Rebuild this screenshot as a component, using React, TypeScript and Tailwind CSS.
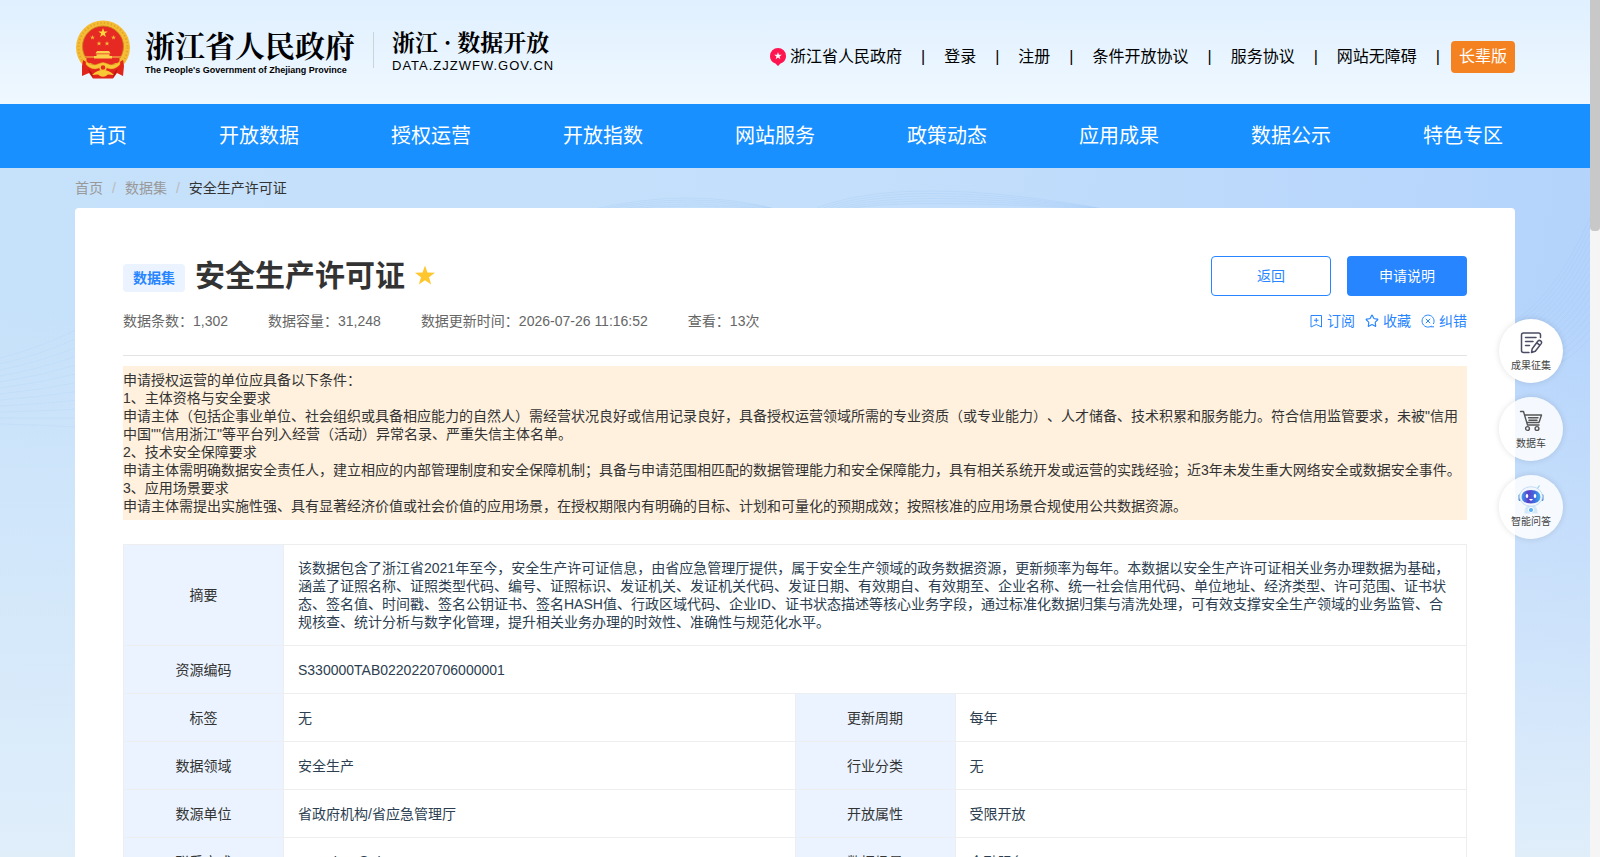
import React from 'react';
import { LuStar } from 'react-icons/lu';

const FONT = "font-['Liberation_Sans','Noto_Sans_CJK_SC',sans-serif]";

const topLinks = ['登录', '注册', '条件开放协议', '服务协议', '网站无障碍'];
const navItems = ['首页', '开放数据', '授权运营', '开放指数', '网站服务', '政策动态', '应用成果', '数据公示', '特色专区'];
const meta = ['数据条数：1,302', '数据容量：31,248', '数据更新时间：2026-07-26 11:16:52', '查看：13次'];
const notice = [
  '申请授权运营的单位应具备以下条件：',
  '1、主体资格与安全要求',
  '申请主体（包括企事业单位、社会组织或具备相应能力的自然人）需经营状况良好或信用记录良好，具备授权运营领域所需的专业资质（或专业能力）、人才储备、技术积累和服务能力。符合信用监管要求，未被"信用中国""信用浙江"等平台列入经营（活动）异常名录、严重失信主体名单。',
  '2、技术安全保障要求',
  '申请主体需明确数据安全责任人，建立相应的内部管理制度和安全保障机制；具备与申请范围相匹配的数据管理能力和安全保障能力，具有相关系统开发或运营的实践经验；近3年未发生重大网络安全或数据安全事件。',
  '3、应用场景要求',
  '申请主体需提出实施性强、具有显著经济价值或社会价值的应用场景，在授权期限内有明确的目标、计划和可量化的预期成效；按照核准的应用场景合规使用公共数据资源。',
];
const summary =
  '该数据包含了浙江省2021年至今，安全生产许可证信息，由省应急管理厅提供，属于安全生产领域的政务数据资源，更新频率为每年。本数据以安全生产许可证相关业务办理数据为基础，涵盖了证照名称、证照类型代码、编号、证照标识、发证机关、发证机关代码、发证日期、有效期自、有效期至、企业名称、统一社会信用代码、单位地址、经济类型、许可范围、证书状态、签名值、时间戳、签名公钥证书、签名HASH值、行政区域代码、企业ID、证书状态描述等核心业务字段，通过标准化数据归集与清洗处理，可有效支撑安全生产领域的业务监管、合规核查、统计分析与数字化管理，提升相关业务办理的时效性、准确性与规范化水平。';
const pairs = [
  ['标签', '无', '更新周期', '每年'],
  ['数据领域', '安全生产', '行业分类', '无'],
  ['数源单位', '省政府机构/省应急管理厅', '开放属性', '受限开放'],
  ['联系方式', 'zcgzxhsg@zj.gov.cn', '数据场景', '金融服务'],
];

function starPoints(cx: number, cy: number, r: number) {
  return Array.from({ length: 10 }, (_, i) => {
    const a = (Math.PI / 5) * i - Math.PI / 2;
    const q = i % 2 ? r * 0.4 : r;
    return `${cx + q * Math.cos(a)},${cy + q * Math.sin(a)}`;
  }).join(' ');
}

function Emblem() {
  return (
    <svg viewBox="0 0 56 60" className="h-[60px] w-14 shrink-0" aria-hidden="true">
      <circle cx="28" cy="27.5" r="27" fill="#f4bd35" />
      <circle cx="28" cy="27.5" r="24.500" fill="none" stroke="#e6a52a" strokeWidth="2" strokeDasharray="1.500 2" />
      <circle cx="28" cy="26.5" r="20.500" fill="#e62a23" stroke="#c9821c" strokeWidth="0.900" />
      <polygon points={starPoints(28, 13, 5)} fill="#fcd63c" />
      <polygon points={starPoints(17.5, 17.5, 2.6)} fill="#f0b63a" />
      <polygon points={starPoints(38.5, 17.5, 2.6)} fill="#f0b63a" />
      <polygon points={starPoints(24, 23.5, 2.6)} fill="#f0b63a" />
      <polygon points={starPoints(32, 23.5, 2.6)} fill="#f0b63a" />
      <path d="M22 31 H34 L35.500 33.500 H20.500 Z M21.500 34.300 H34.500 V36 H37 V38.500 H19 V36 H21.500 Z M10 36.500 H46 L44.500 37.500 H11.500 Z" fill="#fbd14b" />
      <path d="M11.500 39 H44.500 V43 H11.500 Z" fill="#e62a23" />
      <path d="M8 40 L13 43 Q20 49 28 45 Q36 49 43 43 L48 40 L49 46 L48 56 L42 53 L38 58.500 H18 L14 53 L7 56 L7 46 Z" fill="#e1251b" />
      <path d="M11 41 Q17 47 23 44 Q28 41 33 44 Q39 47 45 41 L45 44.500 Q39 51 32 48 Q28 46 24 48 Q17 51 11 44.500 Z" fill="#f8c838" stroke="#e0941a" strokeWidth="0.500" />
      <path d="M13 49 Q18 52 18 58 L15 53 Z M43 49 Q38 52 38 58 L41 53 Z" fill="#b81512" />
      <path d="M17 55 Q22 50 28 50 Q34 50 39 55 L33 54.500 Q28 59 23 54.500 Z" fill="#f9c935" />
      <circle cx="28" cy="47.500" r="3" fill="#e62a23" stroke="#f9c935" strokeWidth="1.400" />
    </svg>
  );
}

function Header() {
  return (
    <header className="bg-linear-to-b from-[#e0f0ff] to-[#eff8ff]">
      <div className="mx-auto flex h-[104px] w-[1440px] max-w-full items-center justify-between">
        <a href="#home" className="flex items-center pb-1 text-black">
          <Emblem />
          <span className="ml-3.5 flex flex-col">
            <span className="font-['Noto_Serif_CJK_SC','Noto_Sans_CJK_SC',serif] text-[30px] leading-10 font-bold">浙江省人民政府</span>
            <span className="text-[9px] leading-3 font-bold whitespace-nowrap">The People's Government of Zhejiang Province</span>
          </span>
          <span className="mx-[18px] h-9 w-px bg-[#ccd3da]" />
          <span className="flex flex-col">
            <span className="font-['Noto_Serif_CJK_SC','Noto_Sans_CJK_SC',serif] text-[23px] leading-8 font-bold">浙江 · 数据开放</span>
            <span className="text-[13px] leading-4 tracking-[1px]">DATA.ZJZWFW.GOV.CN</span>
          </span>
        </a>
        <nav className="flex items-center pt-2.5 text-base text-black">
          <a href="#gov" className="flex items-center gap-1">
            <svg viewBox="0 0 16 18" className="h-[18px] w-4" aria-hidden="true">
              <path d="M8 0 A8 8 0 0 1 16 8 C16 12 13.500 14.500 10.500 15.500 L8 18 L5.500 15.500 C2.500 14.500 0 12 0 8 A8 8 0 0 1 8 0 Z" fill="#ff1450" />
              <polygon points={starPoints(8, 8, 4)} fill="#fff" />
            </svg>
            浙江省人民政府
          </a>
          {topLinks.map((t) => (
            <React.Fragment key={t}>
              <span className="mx-[19px]">|</span>
              <a href="#link">{t}</a>
            </React.Fragment>
          ))}
          <span className="mr-[11px] ml-[19px]">|</span>
          <button type="button" className="h-8 rounded bg-[#f58220] px-2 text-white">长辈版</button>
        </nav>
      </div>
    </header>
  );
}

function Backdrop() {
  return (
    <svg className="absolute inset-0 h-full w-full" viewBox="0 0 1590 689" preserveAspectRatio="none" aria-hidden="true">
      <g fill="none" stroke="#8fc0f2" strokeOpacity="0.2">
        {Array.from({ length: 5 }, (_, i) => (
          <path key={i} d={`M${590 + i * 6} 42 Q690 ${18 + i * 4} 780 42`} />
        ))}
        {Array.from({ length: 6 }, (_, i) => (
          <path key={i} d={`M${812 + i * 6} 42 Q900 ${4 + i * 5} 1110 42`} />
        ))}
        {Array.from({ length: 16 }, (_, i) => (
          <path key={i} d={`M1500 ${160 + i * 3} Q1550 ${140 + i * 5} 1590 ${50 + i * 8}`} />
        ))}
        {Array.from({ length: 12 }, (_, i) => (
          <path key={i} strokeOpacity="0.12" d={`M0 ${190 + i * 6} Q40 ${180 + i * 7} 80 ${160 + i * 9}`} />
        ))}
      </g>
    </svg>
  );
}

function LabelCell({ children }: { children: React.ReactNode }) {
  return (
    <th scope="row" className="border border-[#eceef0] bg-[#eaf3ff] px-3.5 text-center font-normal text-[#333]">
      {children}
    </th>
  );
}

function ValueCell({ children, span }: { children: React.ReactNode; span?: number }) {
  return (
    <td colSpan={span} className="border border-[#eceef0] px-3.5 py-3.5 text-[#2c3e50]">
      {children}
    </td>
  );
}

function DataTable() {
  return (
    <table className="mt-6 w-full table-fixed border-collapse text-sm leading-[18px]">
      <colgroup>
        <col className="w-40" />
        <col />
        <col className="w-40" />
        <col />
      </colgroup>
      <tbody>
        <tr className="h-[101px]">
          <LabelCell>摘要</LabelCell>
          <ValueCell span={3}>{summary}</ValueCell>
        </tr>
        <tr className="h-12">
          <LabelCell>资源编码</LabelCell>
          <ValueCell span={3}>S330000TAB0220220706000001</ValueCell>
        </tr>
        {pairs.map(([a, b, c, d]) => (
          <tr key={a} className="h-12">
            <LabelCell>{a}</LabelCell>
            <ValueCell>{b}</ValueCell>
            <LabelCell>{c}</LabelCell>
            <ValueCell>{d}</ValueCell>
          </tr>
        ))}
      </tbody>
    </table>
  );
}

function SubscribeIcon() {
  return (
    <svg viewBox="0 0 14 14" className="h-3.5 w-3.5" fill="none" stroke="currentColor" aria-hidden="true">
      <path d="M2 1.500 H12.500 V13 L7.250 10.500 L2 13 Z M7.250 4 V8.500 M5 6.250 H9.500" />
    </svg>
  );
}

function CorrectIcon() {
  return (
    <svg viewBox="0 0 14 14" className="h-3.5 w-3.5" fill="none" stroke="currentColor" aria-hidden="true">
      <path d="M10.500 12 A6 6 0 1 1 12.300 10 M9.500 12.800 H13 M4.800 4.800 L9.200 9.200 M9.200 4.800 L4.800 9.200" />
    </svg>
  );
}

function NoteIcon() {
  return (
    <svg viewBox="0 0 24 24" className="mb-[3px] h-6 w-6" fill="none" stroke="#4a4d63" strokeWidth="1.500" strokeLinecap="round" strokeLinejoin="round" aria-hidden="true">
      <path d="M10 21.500 H4.500 Q2.500 21.500 2.500 19.500 V4 Q2.500 2 4.500 2 H19.500 Q21.500 2 21.500 4 V6.500 M6.500 6.500 H17 M6.500 10.500 H14 M6.500 14.500 H10.500" />
      <path d="M12.500 21.500 L13.200 17.800 L19 10 Q20.200 8.800 21.700 9.900 Q23.200 11.100 22.200 12.600 L16.300 20.300 Z M17.800 11.800 L20.800 14.200" />
    </svg>
  );
}

function CartIcon() {
  return (
    <svg viewBox="0 0 24 24" className="mb-[3px] h-6 w-6" fill="none" stroke="#555" strokeWidth="1.400" strokeLinecap="round" strokeLinejoin="round" aria-hidden="true">
      <path d="M1.500 2.500 H4.500 L8.500 16 H20 M5.500 6 H22.500 L20 13.500 H8 M9.500 8.800 H19 M10 11.200 H18" />
      <circle cx="8.500" cy="19.500" r="1.900" />
      <circle cx="18" cy="19.500" r="1.900" />
    </svg>
  );
}

function RobotIcon() {
  return (
    <svg viewBox="0 0 26 30" className="h-[30px] w-[26px]" aria-hidden="true">
      <defs>
        <linearGradient id="visor" x1="0" x2="1">
          <stop offset="0" stopColor="#3fa0f0" />
          <stop offset="0.35" stopColor="#5a3fc8" />
          <stop offset="0.700" stopColor="#3f6fe0" />
          <stop offset="1" stopColor="#3ab0ee" />
        </linearGradient>
      </defs>
      <path d="M19 5 L21.500 1.500" stroke="#8fd0f5" strokeWidth="1.200" />
      <path d="M9 22 H17 Q20 25 19.500 29.500 H6.500 Q6 25 9 22 Z" fill="#d3e8fb" />
      <rect x="0.500" y="10" width="3" height="7" rx="1.500" fill="#4f86c8" />
      <rect x="22.500" y="10" width="3" height="7" rx="1.500" fill="#4f86c8" />
      <ellipse cx="13" cy="12.500" rx="11.500" ry="9.800" fill="#f2f7fd" stroke="#b9d4f0" strokeWidth="0.800" />
      <path d="M3.500 13 Q4 6 13 6 Q22 6 22.500 13 Q22 19.500 13 19.500 Q4 19.500 3.500 13 Z" fill="url(#visor)" />
      <ellipse cx="9" cy="12" rx="1.300" ry="2" fill="#fff" />
      <ellipse cx="17" cy="12" rx="1.300" ry="2" fill="#fff" />
      <path d="M11 15 Q13 18.500 15 15 Z" fill="#fff" />
      <circle cx="13" cy="26" r="2.600" fill="#5db4f5" stroke="#fff" />
    </svg>
  );
}

function FloatButton({ icon, label, solid }: { icon: React.ReactNode; label: string; solid?: boolean }) {
  return (
    <button
      type="button"
      className={`flex h-16 w-16 flex-col items-center justify-end rounded-full pb-[9px] text-[10px] leading-4 text-[#444] shadow-[0_0_6px_rgba(0,0,0,0.12)] ${solid ? 'bg-white' : 'bg-white/85'}`}
    >
      {icon}
      {label}
    </button>
  );
}

export default function App() {
  return (
    <div lang="zh-CN" className={`flex h-screen overflow-hidden [text-spacing-trim:space-all] ${FONT}`}>
      <div className="relative flex min-w-0 flex-1 flex-col overflow-hidden">
        <Header />
        <nav className="bg-[#1890ff]">
          <div className="mx-auto flex h-16 w-[1440px] max-w-full items-center justify-between text-xl text-white">
            {navItems.map((t) => (
              <a key={t} href="#nav" className="px-3">{t}</a>
            ))}
          </div>
        </nav>
        <main className="relative min-h-0 flex-1 bg-[linear-gradient(180deg,rgba(224,240,250,0)_20%,#e0eefa_100%),linear-gradient(100deg,#c6e1fa_0%,#c4dffb_50%,#b2d2fc_100%)]">
          <Backdrop />
          <div className="relative mx-auto w-[1440px] max-w-full">
            <nav className="flex h-10 items-center text-sm text-[#999]">
              <a href="#home">首页</a>
              <span className="mx-[9px] text-[#bbb]">/</span>
              <a href="#sets">数据集</a>
              <span className="mx-[9px] text-[#bbb]">/</span>
              <span className="text-[#333]">安全生产许可证</span>
            </nav>
            <section className="rounded bg-white p-12">
              <div className="flex items-center justify-between">
                <div className="flex items-center">
                  <span className="mt-1 rounded bg-[#eaf3ff] px-2.5 text-sm leading-7 font-bold text-[#2785ff]">数据集</span>
                  <h1 className="ml-2.5 text-[30px] leading-10 font-bold text-[#333]">安全生产许可证</h1>
                  <svg viewBox="0 0 20 20" className="ml-2.5 h-5 w-5" aria-hidden="true">
                    <polygon points={starPoints(10, 10, 10.5)} fill="#ffc62e" />
                  </svg>
                </div>
                <div className="flex gap-4 text-sm">
                  <button type="button" className="h-10 w-[120px] rounded border border-[#2785ff] bg-white text-[#2785ff]">返回</button>
                  <button type="button" className="h-10 w-[120px] rounded bg-[#2785ff] text-white">申请说明</button>
                </div>
              </div>
              <div className="mt-[15px] flex items-center justify-between border-b border-[#e4e4e4] pb-6 text-sm">
                <div className="flex gap-10 text-[#666]">
                  {meta.map((m) => (
                    <span key={m}>{m}</span>
                  ))}
                </div>
                <div className="flex gap-2.5 text-[#2785ff]">
                  <button type="button" className="flex items-center gap-1"><SubscribeIcon />订阅</button>
                  <button type="button" className="flex items-center gap-1"><LuStar className="h-3.5 w-3.5" />收藏</button>
                  <button type="button" className="flex items-center gap-1"><CorrectIcon />纠错</button>
                </div>
              </div>
              <div className="mt-2.5 bg-[#fff1de] py-[5px] text-sm leading-[18px] text-[#333]">
                {notice.map((p) => (
                  <p key={p}>{p}</p>
                ))}
              </div>
              <DataTable />
            </section>
          </div>
        </main>
        <aside className="absolute top-[319px] right-[27px] flex flex-col gap-3.5">
          <FloatButton icon={<NoteIcon />} label="成果征集" solid />
          <FloatButton icon={<CartIcon />} label="数据车" />
          <FloatButton icon={<RobotIcon />} label="智能问答" />
        </aside>
      </div>
      <div className="w-2.5 shrink-0 bg-[#f5f5f5]" aria-hidden="true">
        <div className="h-[27%] rounded-b bg-[#c8c8c8]" />
      </div>
    </div>
  );
}
